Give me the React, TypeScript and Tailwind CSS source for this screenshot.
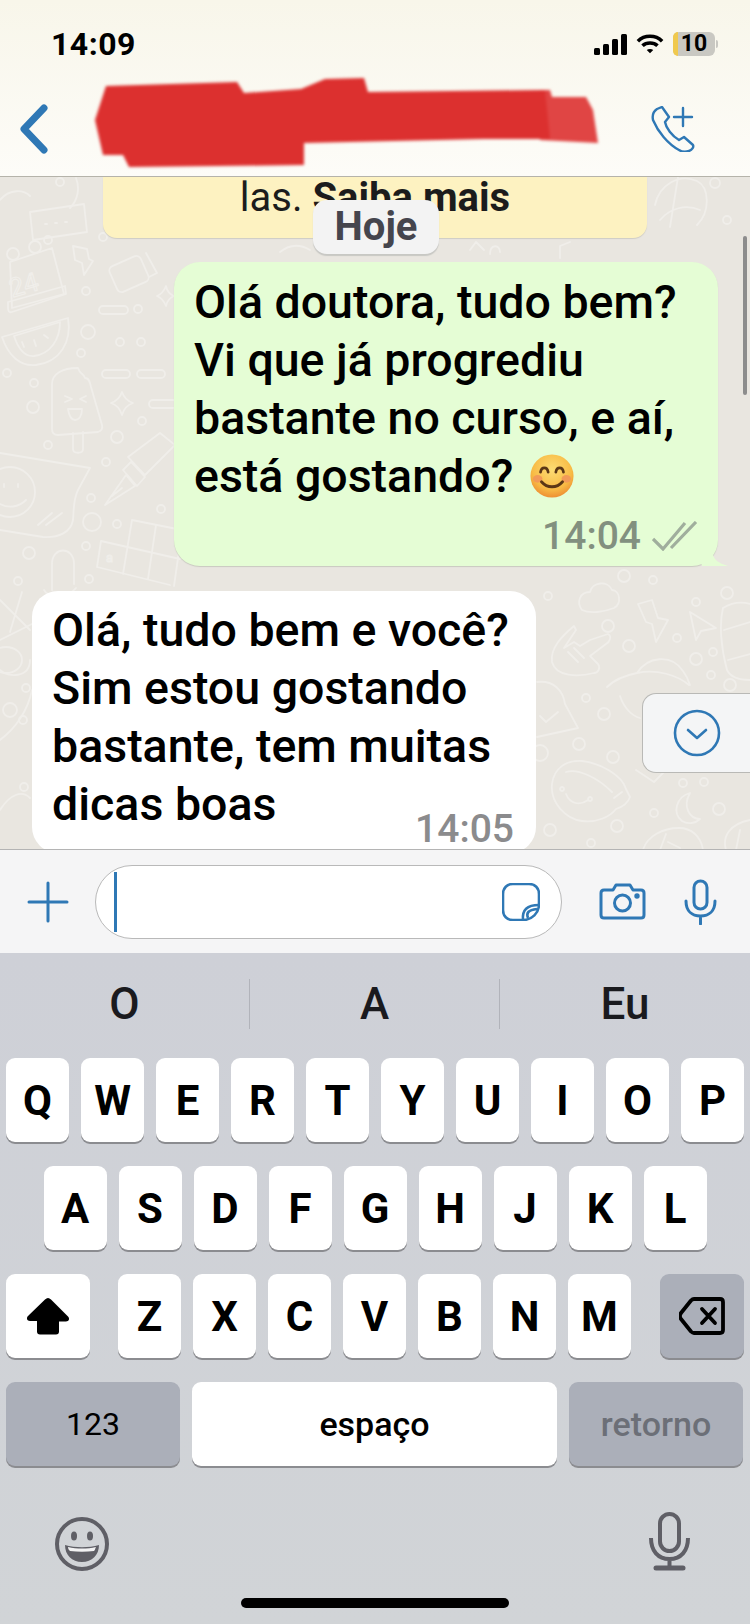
import type { ReactNode } from 'react';

const sans = 'font-["Roboto",sans-serif]';

function Key({ label, className = 'w-[63px]' }: { label: ReactNode; className?: string }) {
  return (
    <div className={`flex h-[84px] items-center justify-center rounded-[9px] bg-white text-[42px] font-bold text-black shadow-[0_2px_0_#8b8c90] ${className}`}>
      {label}
    </div>
  );
}

// [x, y, r] of the small rings scattered through the wallpaper
const rings = [
  [86, 291, 4], [88, 332, 7], [138, 309, 4], [120, 342, 4], [141, 342, 4], [81, 353, 4], [7, 373, 4], [34, 383, 4],
  [33, 407, 6], [48, 445, 4], [117, 437, 6], [142, 421, 4], [106, 462, 4], [91, 498, 4], [92, 522, 9], [117, 524, 4],
  [86, 546, 4], [29, 553, 6], [18, 581, 4], [89, 579, 4], [161, 509, 4], [103, 237, 4], [548, 596, 4], [624, 576, 6],
  [653, 580, 4], [727, 593, 6], [696, 602, 4], [608, 626, 6], [629, 646, 6], [677, 638, 4], [713, 652, 4], [696, 659, 6],
  [711, 675, 4], [730, 685, 6], [586, 698, 4], [604, 714, 6], [579, 744, 6], [613, 757, 6], [683, 783, 4], [704, 782, 4],
  [654, 813, 4], [719, 809, 6], [617, 826, 6], [550, 830, 6], [591, 843, 4], [26, 688, 4], [10, 710, 7], [23, 720, 4],
  [24, 787, 4], [60, 182, 4], [715, 183, 5], [727, 220, 4], [48, 240, 4], [540, 753, 8],
];

function ChatDoodles() {
  return (
    <svg className="absolute inset-0 h-full w-full" viewBox="0 177 750 672" fill="none" stroke="#f0eeea" strokeWidth="1.800" strokeLinecap="round" strokeLinejoin="round" aria-hidden>
      {rings.map(([x, y, r]) => (
        <circle key={`${x}-${y}`} cx={x} cy={y} r={r} />
      ))}
      {/* calendar */}
      <path d="M10 262l42-14 12 46-52 14z" />
      <circle cx="13" cy="254" r="6" />
      <circle cx="35" cy="247" r="6" />
      <path d="M8 302l57-16 1 8-54 18c-3 1-4-1-4-4z" />
      <text x="8" y="292" fontSize="26" fontFamily="Roboto, sans-serif" strokeWidth="1.200" transform="rotate(-16 30 280)">24</text>
      {/* candy and bolt */}
      <rect x="112" y="260" width="34" height="28" rx="5" transform="rotate(-24 129 274)" />
      <path d="M146 253l11 20-8 4" />
      <path d="M73 246l14 3 2 10 4 2-9 14-2-12-7-3z" />
      {/* watermelon */}
      <path d="M2 337l66-19c4 24-8 44-32 47-16 2-28-10-34-28z" />
      <path d="M14 336l46-14c0 18-10 32-26 34-10 1-16-8-20-20z" />
      <path d="M22 342l2 5M34 340l2 6M44 335l4 3" />
      {/* pills and sparkles */}
      <rect x="99" y="306" width="29" height="8" rx="4" />
      <rect x="102" y="370" width="28" height="8" rx="4" />
      <rect x="137" y="370" width="28" height="8" rx="4" />
      <rect x="149" y="400" width="28" height="8" rx="4" />
      <path d="M122 392c2 6 5 9 11 11-6 2-9 5-11 12-2-7-5-10-11-12 6-2 9-5 11-11z" />
      <path d="M166 286c1 5 3 8 8 10-5 2-7 5-8 10-2-5-4-8-9-10 5-2 7-5 9-10z" />
      {/* popsicle */}
      <path d="M52 384c0-10 10-16 26-16 2 7 6 5 7 10 4 0 5 4 6 9l11 38c1 4-1 6-4 7l-40 3c-4 0-6-2-6-6z" />
      <path d="M73 433v16c0 5 10 5 10 0v-17" />
      <path d="M65 396l7 3-7 3M86 396l-6 3 6 3M68 409h14c0 7-3 11-7 11s-6-4-7-11z" />
      {/* pen */}
      <path d="M128 457l32-24 15 12-30 30zM123 470l8-8 14 15-8 9zM105 505l21-30 9 11zM112 496l10-8" />
      {/* speech bubble with smiley */}
      <path d="M0 453l90 15-12 22c-5 10-4 20-5 30-2 12-14 18-30 17L0 530" />
      <circle cx="10" cy="492" r="25" />
      <path d="M4 484v3M18 484v3M0 504c8 4 18 4 26-4M38 525l14-12M46 525l16-12" />
      {/* chocolate */}
      <path d="M101 541l79 18M97 567l73 18M132 520l-9 54M101 541l-4 26M156 525l-8 54M132 520l50 10M182 530l-8 56" />
      <text x="106" y="562" fontSize="13" fontFamily="Roboto, sans-serif" strokeWidth="1">a</text>
      {/* paperclip */}
      <path d="M52 590v-26c0-18 22-18 22 0v20M44 590c4 8 24 8 32-2" />
      {/* left edge under the grid */}
      <path d="M0 600l30 30M22 592l-12 40M0 640l32-16" />
      <ellipse cx="6" cy="660" rx="16" ry="13" />
      <path d="M0 670c8 8 30 8 30-10M0 740c16-12 28-30 32-50M0 810c10-16 22-20 30-12" />
      {/* top, behind the banner */}
      <path d="M30 212l54-8 3 28-54 8z" />
      <path d="M45 224h2M55 223h2M65 222h2" />
      <path d="M0 200c10-12 24-10 30-4M76 178c4 10 2 22-6 30" />
      <path d="M655 205c4-20 24-32 42-24 12 6 14 30 0 44M678 177l-8 50M700 210c-14-6-30-2-40 10" />
      <path d="M280 252c10-8 20-8 30-2M470 250l6-8 8 8M490 254c0-10 10-10 10-2M560 258v-12l10-4" />
      {/* cloud, bolt, arrow, rock hand */}
      <path d="M582 610c-6-8-2-18 8-18 2-10 18-12 22-2 8 0 10 14 2 18-10 4-24 6-32 2z" />
      <path d="M638 604l14-4 6 18 10 2-12 22-4-18-6-2z" />
      <path d="M690 612l26 16-15 3-5 9z" />
      <path d="M552 662c-2-14 10-26 22-36l2 4-12 18 10-6 6 4 10-6 18-6c4 2 2 8-2 10l-16 12 8 8c3 4 0 9-4 9-16 4-38 4-42-11z" />
      <path d="M568 652l10 10M574 648l10 10" />
      {/* bell and helmet */}
      <path d="M537 682c16-2 26 8 28 22l13 24-41 9" />
      <path d="M540 716l6 6 12-10" />
      <path d="M607 687c8-8 20-12 30-14 10-16 34-20 46-2 3 4 5 8 7 14M637 673c20-4 40 2 52 12" />
      <path d="M620 696c4 12 12 20 20 22" />
      <path d="M723 608c10-6 20-6 27-4M723 608c-4 16-2 40 4 62 4 8 14 10 23 10M724 630l26-8M728 660l22-6" />
      {/* cup, moon and ball */}
      <path d="M552 784c2-16 14-24 30-23 18 2 40 14 44 28l4 8c-2 6-8 10-14 12-6 8-20 14-34 12-16-2-32-18-30-37z" />
      <path d="M566 772c12-4 32 6 46 20" />
      <path d="M562 787a2 2 0 1 0 .1 0M590 797a2 2 0 1 0 .1 0M566 794c4 10 14 12 22 6M614 798l8-6" />
      <path d="M690 793c-14 4-18 20-8 28 6 4 14 2 18-2-10 0-18-12-10-26z" />
      <path d="M643 850c4-14 20-22 36-22 12 0 22 8 24 22M666 834l-6 16M668 842l12 6" />
      <path d="M726 850c-4-14 4-26 24-30M740 830l-4 20" />
      <path d="M636 770l18 12 14-14" />
    </svg>
  );
}

function Bubble({ children, className }: { children: ReactNode; className: string }) {
  return <div className={`shrink-0 text-[46.500px] leading-[58px] font-medium text-black ${className}`}>{children}</div>;
}

export default function App() {
  const row1 = ['Q', 'W', 'E', 'R', 'T', 'Y', 'U', 'I', 'O', 'P'];
  const row2 = ['A', 'S', 'D', 'F', 'G', 'H', 'J', 'K', 'L'];
  const row3 = ['Z', 'X', 'C', 'V', 'B', 'N', 'M'];

  return (
    <div className={`relative flex h-[1624px] w-[750px] flex-col overflow-hidden bg-[#d0d3d8] ${sans}`}>
      {/* header */}
      <header className="h-[177px] shrink-0 border-b border-[#b5b3aa] bg-gradient-to-b from-[#f8f6ea] to-[#fdfcf8]">
        <div className="flex h-[90px] items-start justify-between pt-[26px] pr-[32px] pl-[51px]">
          <span className="text-[32px] leading-[36px] font-bold tracking-[0.5px] text-black">14:09</span>
          <div className="flex items-center gap-[9px] pt-[6px]">
            <svg width="33" height="21" viewBox="0 0 33 21" fill="#000">
              <rect x="0" y="14" width="6" height="7" rx="1.500" />
              <rect x="9" y="10" width="6" height="11" rx="1.500" />
              <rect x="18" y="5" width="6" height="16" rx="1.500" />
              <rect x="27" y="0" width="6" height="21" rx="1.500" />
            </svg>
            <svg width="28" height="22" viewBox="0 0 30 22" fill="none" stroke="#000" strokeWidth="3.800">
              <path d="M2 8c7-7 19-7 26 0M7 13c4-4 12-4 16 0" />
              <path d="M11.500 17.500L15 21l3.500-3.500c-2-1.600-5-1.600-7 0z" fill="#000" stroke="none" />
            </svg>
            <div className="flex items-center">
              <div className="relative flex h-[24px] w-[42px] items-center justify-center rounded-[6px] bg-[#c9c8c2]">
                <div className="absolute inset-y-0 left-0 w-[5px] rounded-l-[6px] bg-[#f0c94e]" />
                <span className="relative text-[23px] leading-[24px] font-bold text-black">10</span>
              </div>
              <div className="ml-[1px] h-[8px] w-[2px] rounded-r bg-[#c9c8c2]" />
            </div>
          </div>
        </div>
        <div className="flex items-center justify-between pt-[14px] pr-[53px] pl-[19px]">
          <svg width="30" height="50" viewBox="0 0 30 50" fill="none" stroke="#2f78b5" strokeWidth="7" strokeLinecap="round" strokeLinejoin="round">
            <path d="M25 4L5 25l20 21" />
          </svg>
          <svg width="46" height="46" viewBox="0 0 46 46" fill="none" stroke="#2f78b5" strokeWidth="2.400" strokeLinecap="round" strokeLinejoin="round">
            <path d="M6 3l5-2 7 10-4 5c1 6 7 14 14 18l5-3 9 8c1 2-1 5-4 6-3 1-7 1-10-1C17 38 7 26 2 14 1 9 3 5 6 3z" />
            <path d="M32 2v18M23 11h18" />
          </svg>
        </div>
      </header>

      {/* red scribble over the contact name */}
      <svg className="absolute top-0 left-0 blur-[1.500px]" width="750" height="176" viewBox="0 0 750 176" aria-hidden>
        <path d="M540 90h10l2 7h34l7 13 5 33-58-3z" fill="#e04544" />
        <path d="M106 86l131-4 7 11 57-4 24-10 39-1 4 14 177-2 5 49-67 0-179 4 0 22-175 2-6-12-20 0-8-35z" fill="#dc302f" />
      </svg>

      {/* chat */}
      <main className="relative flex h-[672px] shrink-0 flex-col overflow-hidden bg-[#e9e6e0]">
        <ChatDoodles />
        <div className="relative mx-[103px] flex h-[61px] shrink-0 items-start justify-center rounded-b-[14px] bg-[#fdf2c1] text-[40px] leading-[42px] text-[#1c1c1c] shadow-[0_1px_1px_#cfcdc5]">
          <span>las. <span className="font-bold">Saiba mais</span></span>
        </div>
        <div className="absolute top-[23px] left-[313px] flex h-[54px] w-[126px] items-center justify-center rounded-[14px] bg-[#f3f3f3] text-[40px] font-bold text-[#45454d] shadow-[0_2px_1px_#c8c8c4]">
          Hoje
        </div>
        <Bubble className="relative mt-[24px] ml-[174px] h-[304px] w-[544px] rounded-[26px] bg-[#e5fdd5] pt-[11px] pl-[20px] shadow-[0_1px_1px_#c9c9c0]">
          <p>Olá doutora, tudo bem?</p>
          <p>Vi que já progrediu</p>
          <p>bastante no curso, e aí,</p>
          <p className="flex items-center">
            está gostando?
            <svg width="44" height="44" viewBox="0 0 46 46" className="ml-[17px]">
              <defs>
                <radialGradient id="face" cx="50%" cy="35%" r="65%">
                  <stop offset="0%" stopColor="#fcdc74" />
                  <stop offset="70%" stopColor="#f8bb45" />
                  <stop offset="100%" stopColor="#ee8f33" />
                </radialGradient>
              </defs>
              <circle cx="23" cy="23" r="22.500" fill="url(#face)" />
              <ellipse cx="8" cy="26" rx="5" ry="4" fill="#f29a58" />
              <ellipse cx="38" cy="26" rx="5" ry="4" fill="#f29a58" />
              <path d="M11 19c1-6 7-6 8 0M27 19c1-6 7-6 8 0" fill="none" stroke="#5b3716" strokeWidth="2.800" strokeLinecap="round" />
              <path d="M12 29c6 7 16 7 22 0" fill="none" stroke="#5b3716" strokeWidth="3" strokeLinecap="round" />
            </svg>
          </p>
          <div className="absolute right-[20px] bottom-[8px] flex items-center gap-[11px] text-[39px] leading-[44px] font-medium text-[#82907f]">
            14:04
            <svg width="46" height="30" viewBox="0 0 46 30" fill="none" stroke="#a0ae9d" strokeWidth="3.200">
              <path d="M1 18l10 10L33 2M19 27L44 1" />
            </svg>
          </div>
          <svg className="absolute right-[-10px] bottom-0" width="30" height="14" viewBox="0 0 30 14" fill="#e5fdd5">
            <path d="M0 0h14c2 8 6 11 16 14H4z" />
          </svg>
        </Bubble>
        <Bubble className="relative mt-[25px] ml-[32px] h-[262px] w-[504px] rounded-[26px] bg-white pt-[10px] pl-[20px]">
          <p>Olá, tudo bem e você?</p>
          <p>Sim estou gostando</p>
          <p>bastante, tem muitas</p>
          <p>dicas boas</p>
          <span className="absolute top-[220px] right-[22px] text-[39px] leading-[36px] font-medium text-[#8b8b8d]">14:05</span>
        </Bubble>
        <div className="absolute top-[516px] right-0 flex h-[80px] w-[108px] items-center rounded-l-[14px] border border-r-0 border-[#b9b9b6] bg-[#f4f5f6] pl-[30px]">
          <svg width="48" height="48" viewBox="0 0 48 48" fill="none" stroke="#2f78b5" strokeWidth="2.600" strokeLinecap="round" strokeLinejoin="round">
            <circle cx="24" cy="24" r="22" />
            <path d="M15 21l9 8 9-8" />
          </svg>
        </div>
        <div className="absolute top-[59px] right-[3px] h-[159px] w-[4px] rounded-full bg-[#8d8d8d]" />
      </main>

      {/* input bar */}
      <div className="flex h-[104px] shrink-0 items-center border-t border-[#b4b4b4] bg-[#f5f5f6]">
        <svg width="42" height="42" viewBox="0 0 42 42" stroke="#2f78b5" strokeWidth="3" strokeLinecap="round" className="ml-[27px]">
          <path d="M21 2v38M2 21h38" />
        </svg>
        <div className="ml-[26px] flex h-[74px] w-[467px] items-center justify-between rounded-[37px] border border-[#b9b9b9] bg-white pr-[21px] pl-[18px]">
          <div className="h-[60px] w-[3px] bg-[#2f78b5]" />
          <svg width="38" height="38" viewBox="0 0 38 38" fill="none" stroke="#2f78b5" strokeWidth="2.600" strokeLinejoin="round">
            <path d="M11 1h16c6 0 10 4 10 10v10c0 9-7 16-16 16H11C5 37 1 33 1 27V11C1 5 5 1 11 1z" />
            <path d="M21 37c-1-10 4-15 16-15" />
            <path d="M26 35c-2-5 0-8 9-9" />
          </svg>
        </div>
        <svg width="47" height="37" viewBox="0 0 47 37" fill="none" stroke="#2f78b5" strokeWidth="3" strokeLinejoin="round" className="ml-[37px]">
          <path d="M5 7h9l3-5h14l3 5h8c2 0 3 1 3 3v22c0 2-1 3-3 3H5c-2 0-3-1-3-3V10c0-2 1-3 3-3z" />
          <circle cx="23.500" cy="20" r="8" />
          <circle cx="38" cy="13" r="1.200" fill="#2f78b5" />
        </svg>
        <svg width="33" height="46" viewBox="0 0 33 46" fill="none" stroke="#2f78b5" strokeWidth="3" strokeLinecap="round" className="ml-[38px]">
          <rect x="10" y="2" width="13" height="28" rx="6.500" />
          <path d="M2 22c0 10 6 15 14.500 15S31 32 31 22M16.500 37v8" />
        </svg>
      </div>

      {/* keyboard */}
      <div className="flex min-h-0 flex-1 flex-col bg-gradient-to-b from-[#ced0d7] to-[#d1d4d7]">
        <div className="flex h-[105px] shrink-0 items-center pb-[4px] text-[44px] font-medium text-[#1a1a1e]">
          <div className="flex h-[50px] w-[250px] items-center justify-center border-r border-[#b1b3ba]">O</div>
          <div className="flex h-[50px] w-[250px] items-center justify-center border-r border-[#b1b3ba]">A</div>
          <div className="flex h-[50px] w-[250px] items-center justify-center">Eu</div>
        </div>
        <div className="flex flex-col gap-[24px]">
          <div className="flex justify-center gap-[12px]">
            {row1.map((k) => (
              <Key key={k} label={k} />
            ))}
          </div>
          <div className="flex justify-center gap-[12px]">
            {row2.map((k) => (
              <Key key={k} label={k} />
            ))}
          </div>
          <div className="flex items-center px-[6px]">
            <Key
              className="mr-[28px] w-[84px]"
              label={
                <svg width="44" height="38" viewBox="0 0 44 38" fill="#000">
                  <path d="M22 1c1 0 2 .500 3 1.500l17 17c2 2 1 5-2 5h-7v10c0 2-1 3-3 3H14c-2 0-3-1-3-3V24H4c-3 0-4-3-2-5L19 2.500c1-1 2-1.500 3-1.500z" />
                </svg>
              }
            />
            <div className="flex gap-[12px]">
              {row3.map((k) => (
                <Key key={k} label={k} />
              ))}
            </div>
            <Key
              className="ml-[29px] w-[84px] !bg-[#abafb9]"
              label={
                <svg width="46" height="38" viewBox="0 0 46 38" fill="none" stroke="#000" strokeWidth="3.800" strokeLinejoin="round" strokeLinecap="round">
                  <path d="M15 2h26c2 0 3 1 3 3v28c0 2-1 3-3 3H15c-1 0-2-.500-3-1.500L2 22c-1.500-2-1.500-4 0-6L12 3.500C13 2.500 14 2 15 2z" />
                  <path d="M23 12l13 14M36 12L23 26" />
                </svg>
              }
            />
          </div>
          <div className="flex gap-[12px] px-[6px]">
            <Key className="w-[174px] !bg-[#abafb9] !text-[32px] !font-normal" label="123" />
            <Key className="w-[365px] !text-[34px] !font-medium" label="espaço" />
            <Key className="w-[174px] !bg-[#abafb9] !text-[34px] !font-medium !text-[#6c6f77]" label="retorno" />
          </div>
        </div>
        <div className="flex items-start justify-between pt-[46px] pr-[60px] pl-[55px]">
          <svg width="54" height="56" viewBox="0 0 54 56" className="mt-[4px]">
            <circle cx="27" cy="28" r="25" fill="none" stroke="#5f5f66" strokeWidth="4" />
            <ellipse cx="19" cy="20" rx="3" ry="4.500" fill="#5f5f66" />
            <ellipse cx="35" cy="20" rx="3" ry="4.500" fill="#5f5f66" />
            <path d="M10 29c10 3 24 3 34 0 0 10-7 17-17 17s-17-7-17-17z" fill="#5f5f66" />
            <path d="M13 31c9 2 19 2 28 0-1 2-1 3-2 4-8 1-16 1-24 0-1-1-2-2-2-4z" fill="#f2f2f3" />
          </svg>
          <svg width="41" height="59" viewBox="0 0 41 59" fill="none" stroke="#5f5f66" strokeWidth="4">
            <rect x="11" y="2" width="19" height="37" rx="9.500" />
            <path d="M2 26c0 13 7 21 18.500 21S39 39 39 26M20.500 47v9" />
            <path d="M7 56h27" strokeWidth="5" strokeLinecap="round" />
          </svg>
        </div>
        <div className="mx-auto mt-[26px] h-[10px] w-[268px] rounded-full bg-black" />
      </div>
    </div>
  );
}
